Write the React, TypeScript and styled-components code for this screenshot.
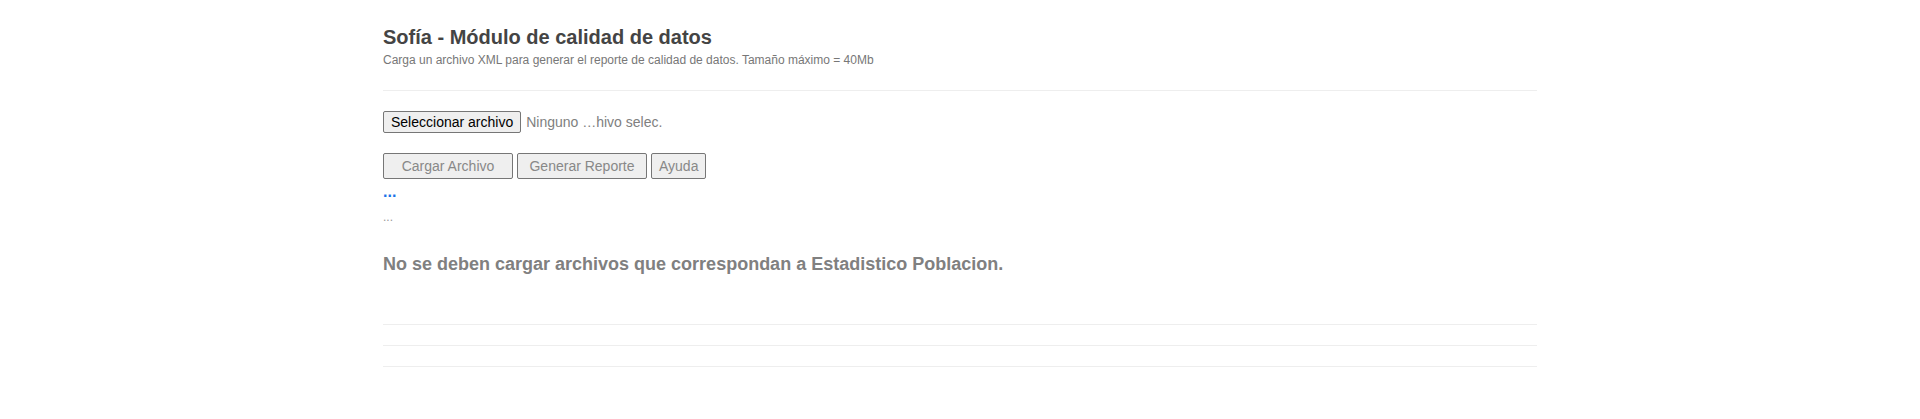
import React from "react";
import styled, { createGlobalStyle } from "styled-components";

const Global = createGlobalStyle`
  html, body { margin: 0; padding: 0; background: #ffffff; }
  body { font-family: "Liberation Sans", Arial, sans-serif; color: #333; }
`;

const Container = styled.div`
  max-width: 1154px;
  margin: 0 auto;
  padding-top: 26px;
`;

const Header = styled.header`
  padding-bottom: 21px;
  border-bottom: 1px solid #eeeeee;
`;

const Title = styled.h1`
  margin: 0;
  font-size: 20px;
  line-height: 22px;
  font-weight: bold;
  color: #444444;
`;

const Subtitle = styled.p`
  margin: 4px 0 0;
  font-size: 12px;
  line-height: 17px;
  color: #777777;
`;

const FileRow = styled.div`
  margin-top: 20px;
  display: flex;
  align-items: center;
  gap: 5px;
  height: 22px;
`;

const NativeButton = styled.button<{ $w?: number; $disabled?: boolean }>`
  box-sizing: border-box;
  font-family: "Liberation Sans", Arial, sans-serif;
  font-size: 14px;
  background: #efefef;
  border: 1px solid #767676;
  border-radius: 2px;
  color: ${(p) => (p.$disabled ? "#888888" : "#000000")};
  padding: 0 7px;
  ${(p) => (p.$w ? `width: ${p.$w}px;` : "")}
  cursor: default;
`;

const FileButton = styled(NativeButton)`
  height: 22px;
  line-height: 20px;
`;

const FileName = styled.span`
  font-size: 14px;
  color: #808080;
`;

const ButtonRow = styled.div`
  margin-top: 20px;
  display: flex;
  gap: 4px;
`;

const ActionButton = styled(NativeButton)`
  height: 26px;
  line-height: 24px;
`;

const BlueDots = styled.div`
  margin-top: 4px;
  font-size: 16px;
  line-height: 18px;
  font-weight: bold;
  color: #1a73e8;
`;

const GrayDots = styled.div`
  margin-top: 8px;
  font-size: 12px;
  line-height: 17px;
  color: #999999;
`;

const Message = styled.h3`
  margin: 28px 0 0;
  font-size: 18px;
  line-height: 20px;
  font-weight: bold;
  color: #808080;
`;

const Lines = styled.div`
  margin-top: 50px;
  display: flex;
  flex-direction: column;
  gap: 20px;
`;

const Rule = styled.div`
  border-top: 1px solid #eeeeee;
`;

export default function App() {
  return (
    <>
      <Global />
      <Container>
        <Header>
          <Title>Sofía - Módulo de calidad de datos</Title>
          <Subtitle>
            Carga un archivo XML para generar el reporte de calidad de datos. Tamaño máximo = 40Mb
          </Subtitle>
        </Header>
        <FileRow>
          <FileButton>Seleccionar archivo</FileButton>
          <FileName>Ninguno …hivo selec.</FileName>
        </FileRow>
        <ButtonRow>
          <ActionButton $w={130} $disabled>Cargar Archivo</ActionButton>
          <ActionButton $w={130} $disabled>Generar Reporte</ActionButton>
          <ActionButton $disabled>Ayuda</ActionButton>
        </ButtonRow>
        <BlueDots>...</BlueDots>
        <GrayDots>...</GrayDots>
        <Message>No se deben cargar archivos que correspondan a Estadistico Poblacion.</Message>
        <Lines>
          <Rule />
          <Rule />
          <Rule />
        </Lines>
      </Container>
    </>
  );
}
